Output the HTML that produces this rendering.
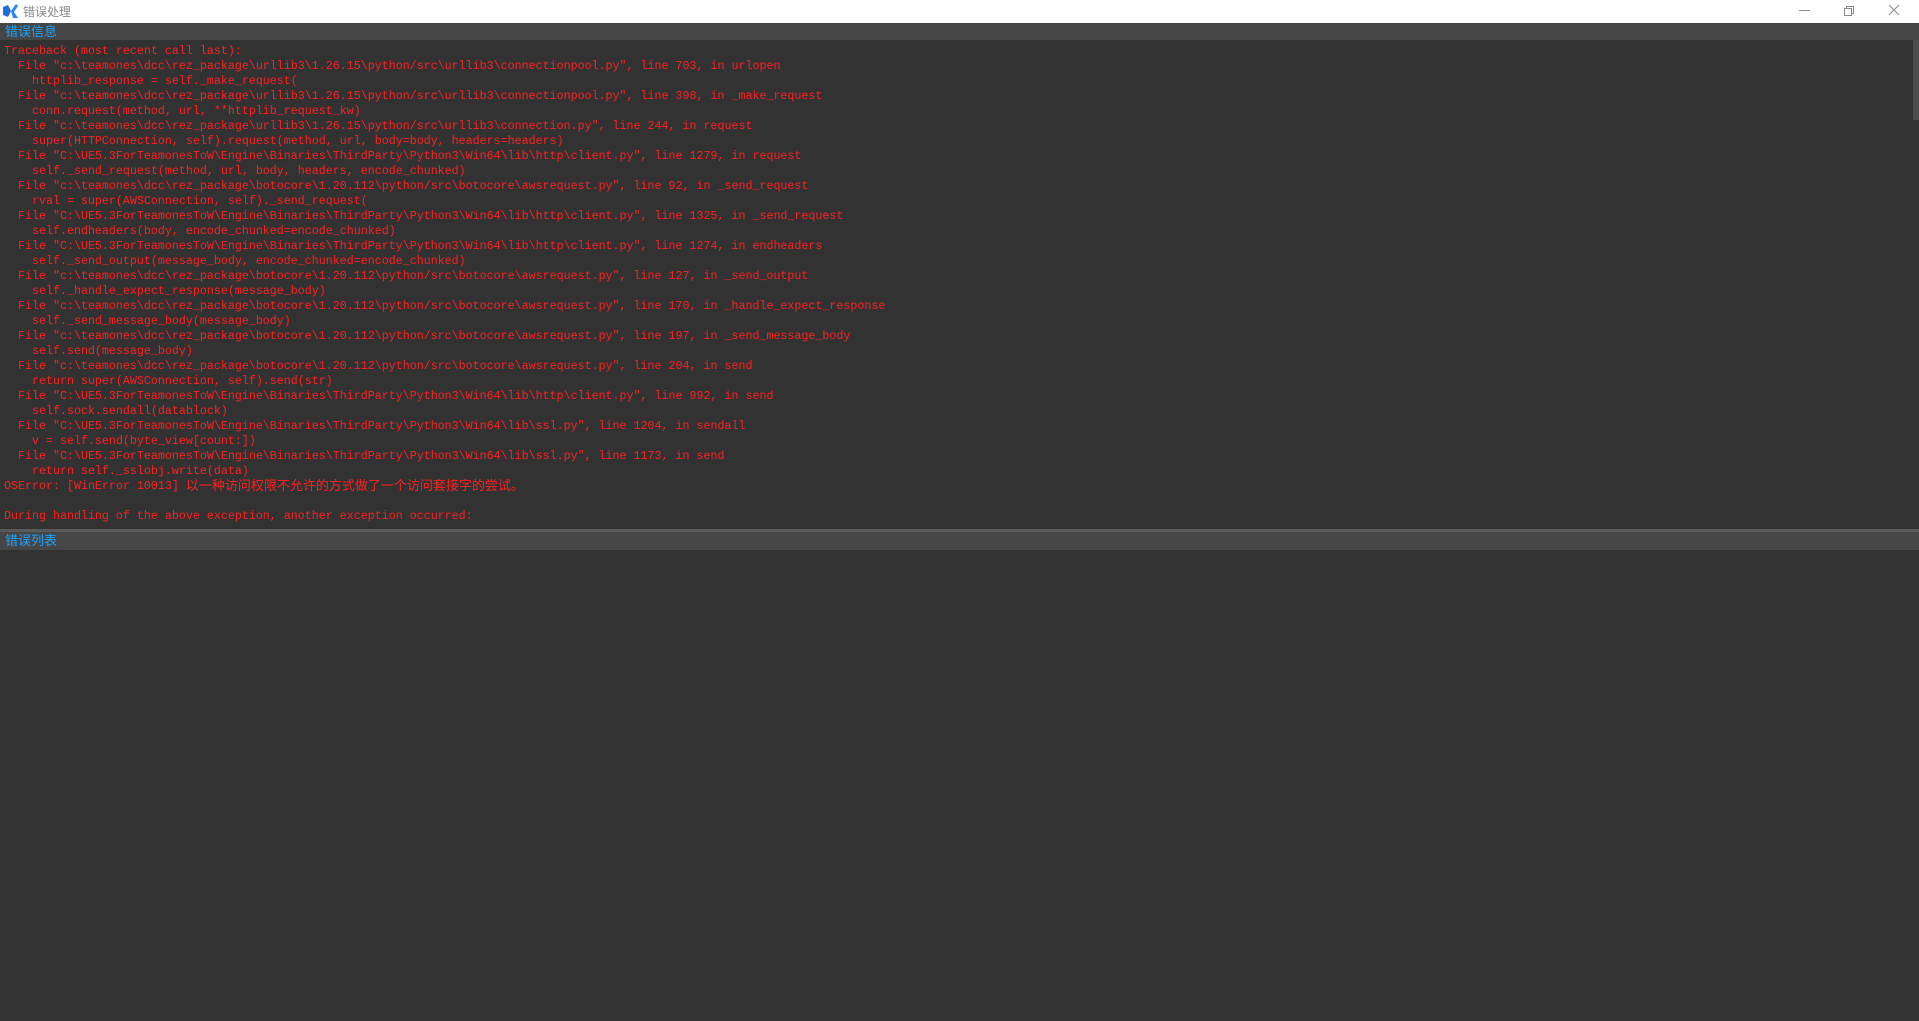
<!DOCTYPE html>
<html><head><meta charset="utf-8"><style>
*{margin:0;padding:0;box-sizing:border-box}
body{width:1919px;height:1021px;background:#323232;overflow:hidden;position:relative;font-family:"Liberation Sans","Noto Sans CJK SC",sans-serif}
#tb{position:absolute;left:0;top:0;width:1919px;height:23px;background:#fff}
#tt{position:absolute;left:23px;top:3px;font-size:12px;color:#8a8a8a}
.hd{position:absolute;left:0;width:1919px;background:#464646;color:#1aa3ff;font-size:13px;line-height:17px;padding-left:5px}
#log{position:absolute;left:4px;top:44px;font-family:"Liberation Mono","Noto Sans CJK SC",monospace;font-size:11.67px;line-height:15px;color:#ff2020;white-space:pre}
.cj{display:inline-block;height:15px;vertical-align:top;position:relative;top:-2px;font-size:13px;line-height:15px;font-family:"Noto Sans CJK SC",sans-serif}
#sb{position:absolute;left:1913px;top:40px;width:6px;height:80px;background:#4c4c4c}
#sep{position:absolute;left:0;top:529px;width:1919px;height:3px;background:#5a5a5a}
</style></head><body>
<div id="tb">
<svg style="position:absolute;left:2px;top:3px" width="17" height="16" viewBox="0 0 17 16"><path d="M1 4 L6 2 L9 8 L6 14 L1 12 Z" fill="#1e6fd9"/><path d="M9 8 L14 1 L16 3 L12 9 L16 15 L11 15 Z" fill="#2a86f0"/></svg>
<div id="tt">错误处理</div>
<svg style="position:absolute;left:1798px;top:4px" width="16" height="14"><line x1="1" y1="6.5" x2="12" y2="6.5" stroke="#888" stroke-width="1"/></svg>
<svg style="position:absolute;left:1843px;top:4px" width="16" height="14"><rect x="1.5" y="4.5" width="7" height="7" fill="none" stroke="#888"/><path d="M3.5 4.5 V2.5 H10.5 V9.5 H8.5" fill="none" stroke="#888"/></svg>
<svg style="position:absolute;left:1888px;top:4px" width="16" height="14"><path d="M1 1 L11 11 M11 1 L1 11" stroke="#888" stroke-width="1"/></svg>
</div>
<div class="hd" style="top:23px;height:17px">错误信息</div>
<div id="sb"></div>
<div id="log">Traceback (most recent call last):
  File "c:\teamones\dcc\rez_package\urllib3\1.26.15\python/src\urllib3\connectionpool.py", line 703, in urlopen
    httplib_response = self._make_request(
  File "c:\teamones\dcc\rez_package\urllib3\1.26.15\python/src\urllib3\connectionpool.py", line 398, in _make_request
    conn.request(method, url, **httplib_request_kw)
  File "c:\teamones\dcc\rez_package\urllib3\1.26.15\python/src\urllib3\connection.py", line 244, in request
    super(HTTPConnection, self).request(method, url, body=body, headers=headers)
  File "C:\UE5.3ForTeamonesToW\Engine\Binaries\ThirdParty\Python3\Win64\lib\http\client.py", line 1279, in request
    self._send_request(method, url, body, headers, encode_chunked)
  File "c:\teamones\dcc\rez_package\botocore\1.20.112\python/src\botocore\awsrequest.py", line 92, in _send_request
    rval = super(AWSConnection, self)._send_request(
  File "C:\UE5.3ForTeamonesToW\Engine\Binaries\ThirdParty\Python3\Win64\lib\http\client.py", line 1325, in _send_request
    self.endheaders(body, encode_chunked=encode_chunked)
  File "C:\UE5.3ForTeamonesToW\Engine\Binaries\ThirdParty\Python3\Win64\lib\http\client.py", line 1274, in endheaders
    self._send_output(message_body, encode_chunked=encode_chunked)
  File "c:\teamones\dcc\rez_package\botocore\1.20.112\python/src\botocore\awsrequest.py", line 127, in _send_output
    self._handle_expect_response(message_body)
  File "c:\teamones\dcc\rez_package\botocore\1.20.112\python/src\botocore\awsrequest.py", line 170, in _handle_expect_response
    self._send_message_body(message_body)
  File "c:\teamones\dcc\rez_package\botocore\1.20.112\python/src\botocore\awsrequest.py", line 197, in _send_message_body
    self.send(message_body)
  File "c:\teamones\dcc\rez_package\botocore\1.20.112\python/src\botocore\awsrequest.py", line 204, in send
    return super(AWSConnection, self).send(str)
  File "C:\UE5.3ForTeamonesToW\Engine\Binaries\ThirdParty\Python3\Win64\lib\http\client.py", line 992, in send
    self.sock.sendall(datablock)
  File "C:\UE5.3ForTeamonesToW\Engine\Binaries\ThirdParty\Python3\Win64\lib\ssl.py", line 1204, in sendall
    v = self.send(byte_view[count:])
  File "C:\UE5.3ForTeamonesToW\Engine\Binaries\ThirdParty\Python3\Win64\lib\ssl.py", line 1173, in send
    return self._sslobj.write(data)
OSError: [WinError 10013] <span class="cj">以一种访问权限不允许的方式做了一个访问套接字的尝试。</span>

During handling of the above exception, another exception occurred:</div>
<div id="sep"></div>
<div class="hd" style="top:532px;height:18px;line-height:18px">错误列表</div>
</body></html>
